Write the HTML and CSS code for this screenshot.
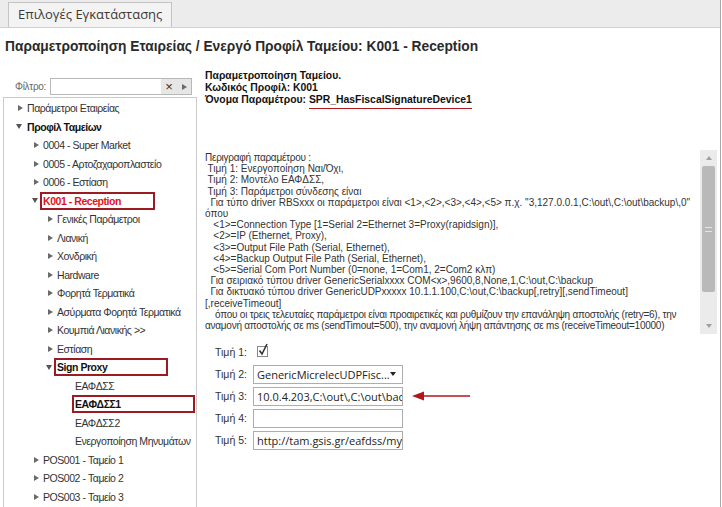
FILE: index.html
```html
<!DOCTYPE html>
<html lang="el">
<head>
<meta charset="UTF-8">
<title>Επιλογές Εγκατάστασης</title>
<link rel="stylesheet" href="styles.css">
</head>
<body>
<div class="window">

<div class="tabstrip">
    <div class="tab">Επιλογές Εγκατάστασης</div>
</div>

<h1 class="title">Παραμετροποίηση Εταιρείας / Ενεργό Προφίλ Ταμείου: K001 - Reception</h1>

<div class="main">

    <div class="side">
        <div class="filter">
            <label>Φίλτρο:</label>
            <div class="filterbox">
                <span class="fb-input"></span>
                <span class="fb-btns"><span class="fb-x">×</span><span class="tw-r"></span></span>
            </div>
        </div>

        <ul class="tree">
            <li class="l0"><span class="tw"><i class="tw-r"></i></span>Παράμετροι Εταιρείας</li>
            <li class="l0 bold"><span class="tw"><i class="tw-d"></i></span>Προφίλ Ταμείων</li>
            <li class="l1"><span class="tw"><i class="tw-r"></i></span>0004 - Super Market</li>
            <li class="l1"><span class="tw"><i class="tw-r"></i></span>0005 - Αρτοζαχαροπλαστείο</li>
            <li class="l1"><span class="tw"><i class="tw-r"></i></span>0006 - Εστίαση</li>
            <li class="l1"><span class="tw"><i class="tw-d"></i></span><span class="mark red w114">K001 - Reception</span></li>
            <li class="l2"><span class="tw"><i class="tw-r"></i></span>Γενικές Παράμετροι</li>
            <li class="l2"><span class="tw"><i class="tw-r"></i></span>Λιανική</li>
            <li class="l2"><span class="tw"><i class="tw-r"></i></span>Χονδρική</li>
            <li class="l2"><span class="tw"><i class="tw-r"></i></span>Hardware</li>
            <li class="l2"><span class="tw"><i class="tw-r"></i></span>Φορητά Τερματικά</li>
            <li class="l2"><span class="tw"><i class="tw-r"></i></span>Ασύρματα Φορητά Τερματικά</li>
            <li class="l2"><span class="tw"><i class="tw-r"></i></span>Κουμπιά Λιανικής &gt;&gt;</li>
            <li class="l2"><span class="tw"><i class="tw-r"></i></span>Εστίαση</li>
            <li class="l2"><span class="tw"><i class="tw-d"></i></span><span class="mark w113">Sign Proxy</span></li>
            <li class="l3"><span class="tw"></span>ΕΑΦΔΣΣ</li>
            <li class="l3"><span class="tw"></span><span class="mark w122">ΕΑΦΔΣΣ1</span></li>
            <li class="l3"><span class="tw"></span>ΕΑΦΔΣΣ2</li>
            <li class="l3"><span class="tw"></span>Ενεργοποίηση Μηνυμάτων</li>
            <li class="l1"><span class="tw"><i class="tw-r"></i></span>POS001 - Ταμείο 1</li>
            <li class="l1"><span class="tw"><i class="tw-r"></i></span>POS002 - Ταμείο 2</li>
            <li class="l1"><span class="tw"><i class="tw-r"></i></span>POS003 - Ταμείο 3</li>
        </ul>
    </div>

    <div class="content">
        <div class="info">
            <div>Παραμετροποίηση Ταμείου.</div>
            <div>Κωδικός Προφίλ: K001</div>
            <div>Όνομα Παραμέτρου: <span class="pname">SPR_HasFiscalSignatureDevice1</span></div>
        </div>

        <div class="desc">
            <div class="desc-text">
                <div class="g">Περιγραφή παραμέτρου :</div>
                <div> Τιμή 1: Ενεργοποίηση Ναι/Όχι,</div>
                <div> Τιμή 2: Μοντέλο ΕΑΦΔΣΣ,</div>
                <div> Τιμή 3: Παράμετροι σύνδεσης είναι</div>
                <div>  Για τύπο driver RBSxxx οι παράμετροι είναι &lt;1&gt;,&lt;2&gt;,&lt;3&gt;,&lt;4&gt;,&lt;5&gt; π.χ. "3,127.0.0.1,C:\out\,C:\out\backup\,0"</div>
                <div>όπου</div>
                <div>   &lt;1&gt;=Connection Type [1=Serial 2=Ethernet 3=Proxy(rapidsign)],</div>
                <div>   &lt;2&gt;=IP (Ethernet, Proxy),</div>
                <div>   &lt;3&gt;=Output File Path (Serial, Ethernet),</div>
                <div>   &lt;4&gt;=Backup Output File Path (Serial, Ethernet),</div>
                <div>   &lt;5&gt;=Serial Com Port Number (0=none, 1=Com1, 2=Com2 κλπ)</div>
                <div>  Για σειριακό τύπου driver GenericSerialxxxx COM&lt;x&gt;,9600,8,None,1,C:\out,C:\backup</div>
                <div>  Για δικτυακό τύπου driver GenericUDPxxxxx 10.1.1.100,C:\out,C:\backup[,retry][,sendTimeout]</div>
                <div>[,receiveTimeout]</div>
                <div class="g">    όπου οι τρεις τελευταίες παράμετροι είναι προαιρετικές και ρυθμίζουν την επανάληψη αποστολής (retry=6), την</div>
                <div class="g">αναμονή αποστολής σε ms (sendTimout=500), την αναμονή λήψη απάντησης σε ms (receiveTimeout=10000)</div>
            </div>
            <div class="scrollbar">
                <span class="sb-up"></span>
                <div class="sb-track">
                    <div class="sb-thumb"><span class="grip"></span></div>
                </div>
                <span class="sb-down"></span>
            </div>
        </div>

        <div class="form">
            <div class="row">
                <label>Τιμή 1:</label>
                <svg class="check" width="12" height="14" viewBox="0 0 12 14">
                    <rect x="0.5" y="3.5" width="10" height="10" fill="#fff" stroke="#8a8a8a"/>
                    <path d="M2.5 7.5 L5 11 L10 1" fill="none" stroke="#333" stroke-width="1.6"/>
                </svg>
            </div>
            <div class="row">
                <label>Τιμή 2:</label>
                <div class="field select">GenericMicrelecUDPFisc...<span class="dd"></span></div>
            </div>
            <div class="row">
                <label>Τιμή 3:</label>
                <div class="field">10.0.4.203,C:\out\,C:\out\backup</div>
                <svg class="pointer" width="60" height="10" viewBox="0 0 60 10">
                    <path d="M0 5 L12 0.5 L12 9.5 Z" fill="#b3151c"/>
                    <line x1="10" y1="5" x2="58" y2="5" stroke="#b3151c" stroke-width="1.3"/>
                </svg>
            </div>
            <div class="row">
                <label>Τιμή 4:</label>
                <div class="field"></div>
            </div>
            <div class="row">
                <label>Τιμή 5:</label>
                <div class="field">http://tam.gsis.gr/eafdss/mywebservice</div>
            </div>
        </div>
    </div>

</div>
</div>
</body>
</html>
```

FILE: styles.css
```css
body{
    margin:0;
    font-family:"Liberation Sans", Arial, sans-serif;
    color:#222;
    background:#fff;
}

.window{
    width:720px;
    height:507px;
    border-right:1px solid #a8a8a8;
    overflow:hidden;
}

.tabstrip{
    height:28px;
    background:#ececec;
    border-bottom:1px solid #d0d0d0;
    padding-left:8px;
    display:flex;
    align-items:flex-end;
    box-sizing:border-box;
}

.tab{
    height:24px;
    padding:0 9px;
    border:1px solid #c4c4c4;
    border-bottom:none;
    background:#f3f3f3;
    font-family:"Open Sans", sans-serif;
    font-size:13px;
    line-height:23px;
    color:#3a3a3a;
}

.title{
    margin:0;
    height:42px;
    box-sizing:border-box;
    padding:11px 5px 0;
    font-size:13.75px;
    line-height:16px;
    font-weight:bold;
    color:#2a2a2a;
}

.main{
    display:flex;
    height:437px;
}

/* left side: filter + tree */

.side{
    width:197px;
    flex:none;
    padding-left:3px;
    box-sizing:border-box;
}

.filter{
    display:flex;
    align-items:center;
    margin-top:8px;
    height:17px;
}

.filter label{
    width:47px;
    padding-left:12px;
    box-sizing:border-box;
    font-size:10px;
    letter-spacing:-0.3px;
    color:#666;
}

.filterbox{
    display:flex;
    width:142px;
    height:17px;
    border:1px solid #b8b8b8;
    box-sizing:border-box;
}

.fb-input{
    flex:1;
}

.fb-btns{
    width:30px;
    background:#e6e6e6;
    display:flex;
    align-items:center;
    justify-content:space-around;
}

.fb-x{
    font-size:13px;
    line-height:13px;
    color:#333;
}

.tree{
    list-style:none;
    margin:2px 0 0;
    padding:1px 0 0;
    height:420px;
    border:1px solid #cbcbcb;
    border-bottom:none;
    font-size:10.5px;
    letter-spacing:-0.45px;
    color:#333;
}

.tree li{
    display:flex;
    align-items:center;
    height:18.5px;
    white-space:nowrap;
}

.tree .l0{ padding-left:14px; }
.tree .l1{ padding-left:30px; }
.tree .l2{ padding-left:44px; }
.tree .l3{ padding-left:62px; }

.tw{
    width:9px;
    flex:none;
    display:flex;
    align-items:center;
}

.tw-r{
    display:block;
    width:0;
    height:0;
    border-left:5px solid #6a6a6a;
    border-top:3.5px solid transparent;
    border-bottom:3.5px solid transparent;
}

.tw-d{
    display:block;
    width:0;
    height:0;
    margin-left:-2px;
    border-top:5px solid #555;
    border-left:3.5px solid transparent;
    border-right:3.5px solid transparent;
}

.bold{
    font-weight:bold;
    color:#111;
}

.mark{
    display:inline-block;
    margin-left:-3px;
    padding-left:1px;
    line-height:14px;
    border:2px solid #9c1b22;
    font-weight:bold;
    color:#111;
}

.mark.red{ color:#e0121c; }
.w114{ width:110px; }
.w113{ width:109px; }
.w122{ width:118px; }

/* right side */

.content{
    flex:1;
    padding-left:8px;
    min-width:0;
}

.info{
    height:80px;
    font-size:10.4px;
    line-height:12px;
    font-weight:bold;
    color:#111;
}

.pname{
    display:inline-block;
    padding-bottom:2px;
    border-bottom:1px solid #b31a20;
}

.desc{
    display:flex;
    height:184px;
    margin-right:3px;
}

.desc-text{
    flex:1;
    padding-top:2px;
    font-size:10px;
    line-height:11.2px;
    color:#333;
    overflow:hidden;
}

.desc-text div{
    white-space:pre;
}

.desc-text .g{
    letter-spacing:-0.25px;
}

.scrollbar{
    width:17px;
    background:#ebebeb;
    display:flex;
    flex-direction:column;
    align-items:center;
}

.sb-up, .sb-down{
    width:0;
    height:0;
    margin:6px 0;
    border-left:3px solid transparent;
    border-right:3px solid transparent;
}
.sb-up{ border-bottom:4px solid #a0a0a0; }
.sb-down{ border-top:4px solid #a0a0a0; }

.sb-track{
    flex:1;
    width:100%;
    display:flex;
    flex-direction:column;
}

.sb-thumb{
    height:126px;
    margin:0 2px;
    background:#b9b9b9;
    border-radius:2px;
    display:flex;
    align-items:center;
    justify-content:center;
}

.grip{
    width:7px;
    height:5px;
    border-top:1px solid #e4e4e4;
    border-bottom:1px solid #e4e4e4;
    box-sizing:border-box;
}

.form{
    padding:7px 0 0 10px;
}

.row{
    display:flex;
    align-items:center;
    height:22px;
}

.row label{
    width:38px;
    flex:none;
    font-size:10.5px;
    color:#333;
}

.check{
    margin-left:4px;
    margin-top:-4px;
}

.field{
    width:150px;
    height:19px;
    box-sizing:border-box;
    border:1px solid #adadad;
    padding:0 3px;
    font-family:"Open Sans", sans-serif;
    font-size:11px;
    line-height:17px;
    color:#222;
    white-space:nowrap;
    overflow:hidden;
}

.select{
    display:flex;
    justify-content:space-between;
    align-items:center;
}

.dd{
    width:0;
    height:0;
    margin-right:6px;
    border-top:4px solid #222;
    border-left:3.5px solid transparent;
    border-right:3.5px solid transparent;
}

.pointer{
    margin-left:9px;
}
```
